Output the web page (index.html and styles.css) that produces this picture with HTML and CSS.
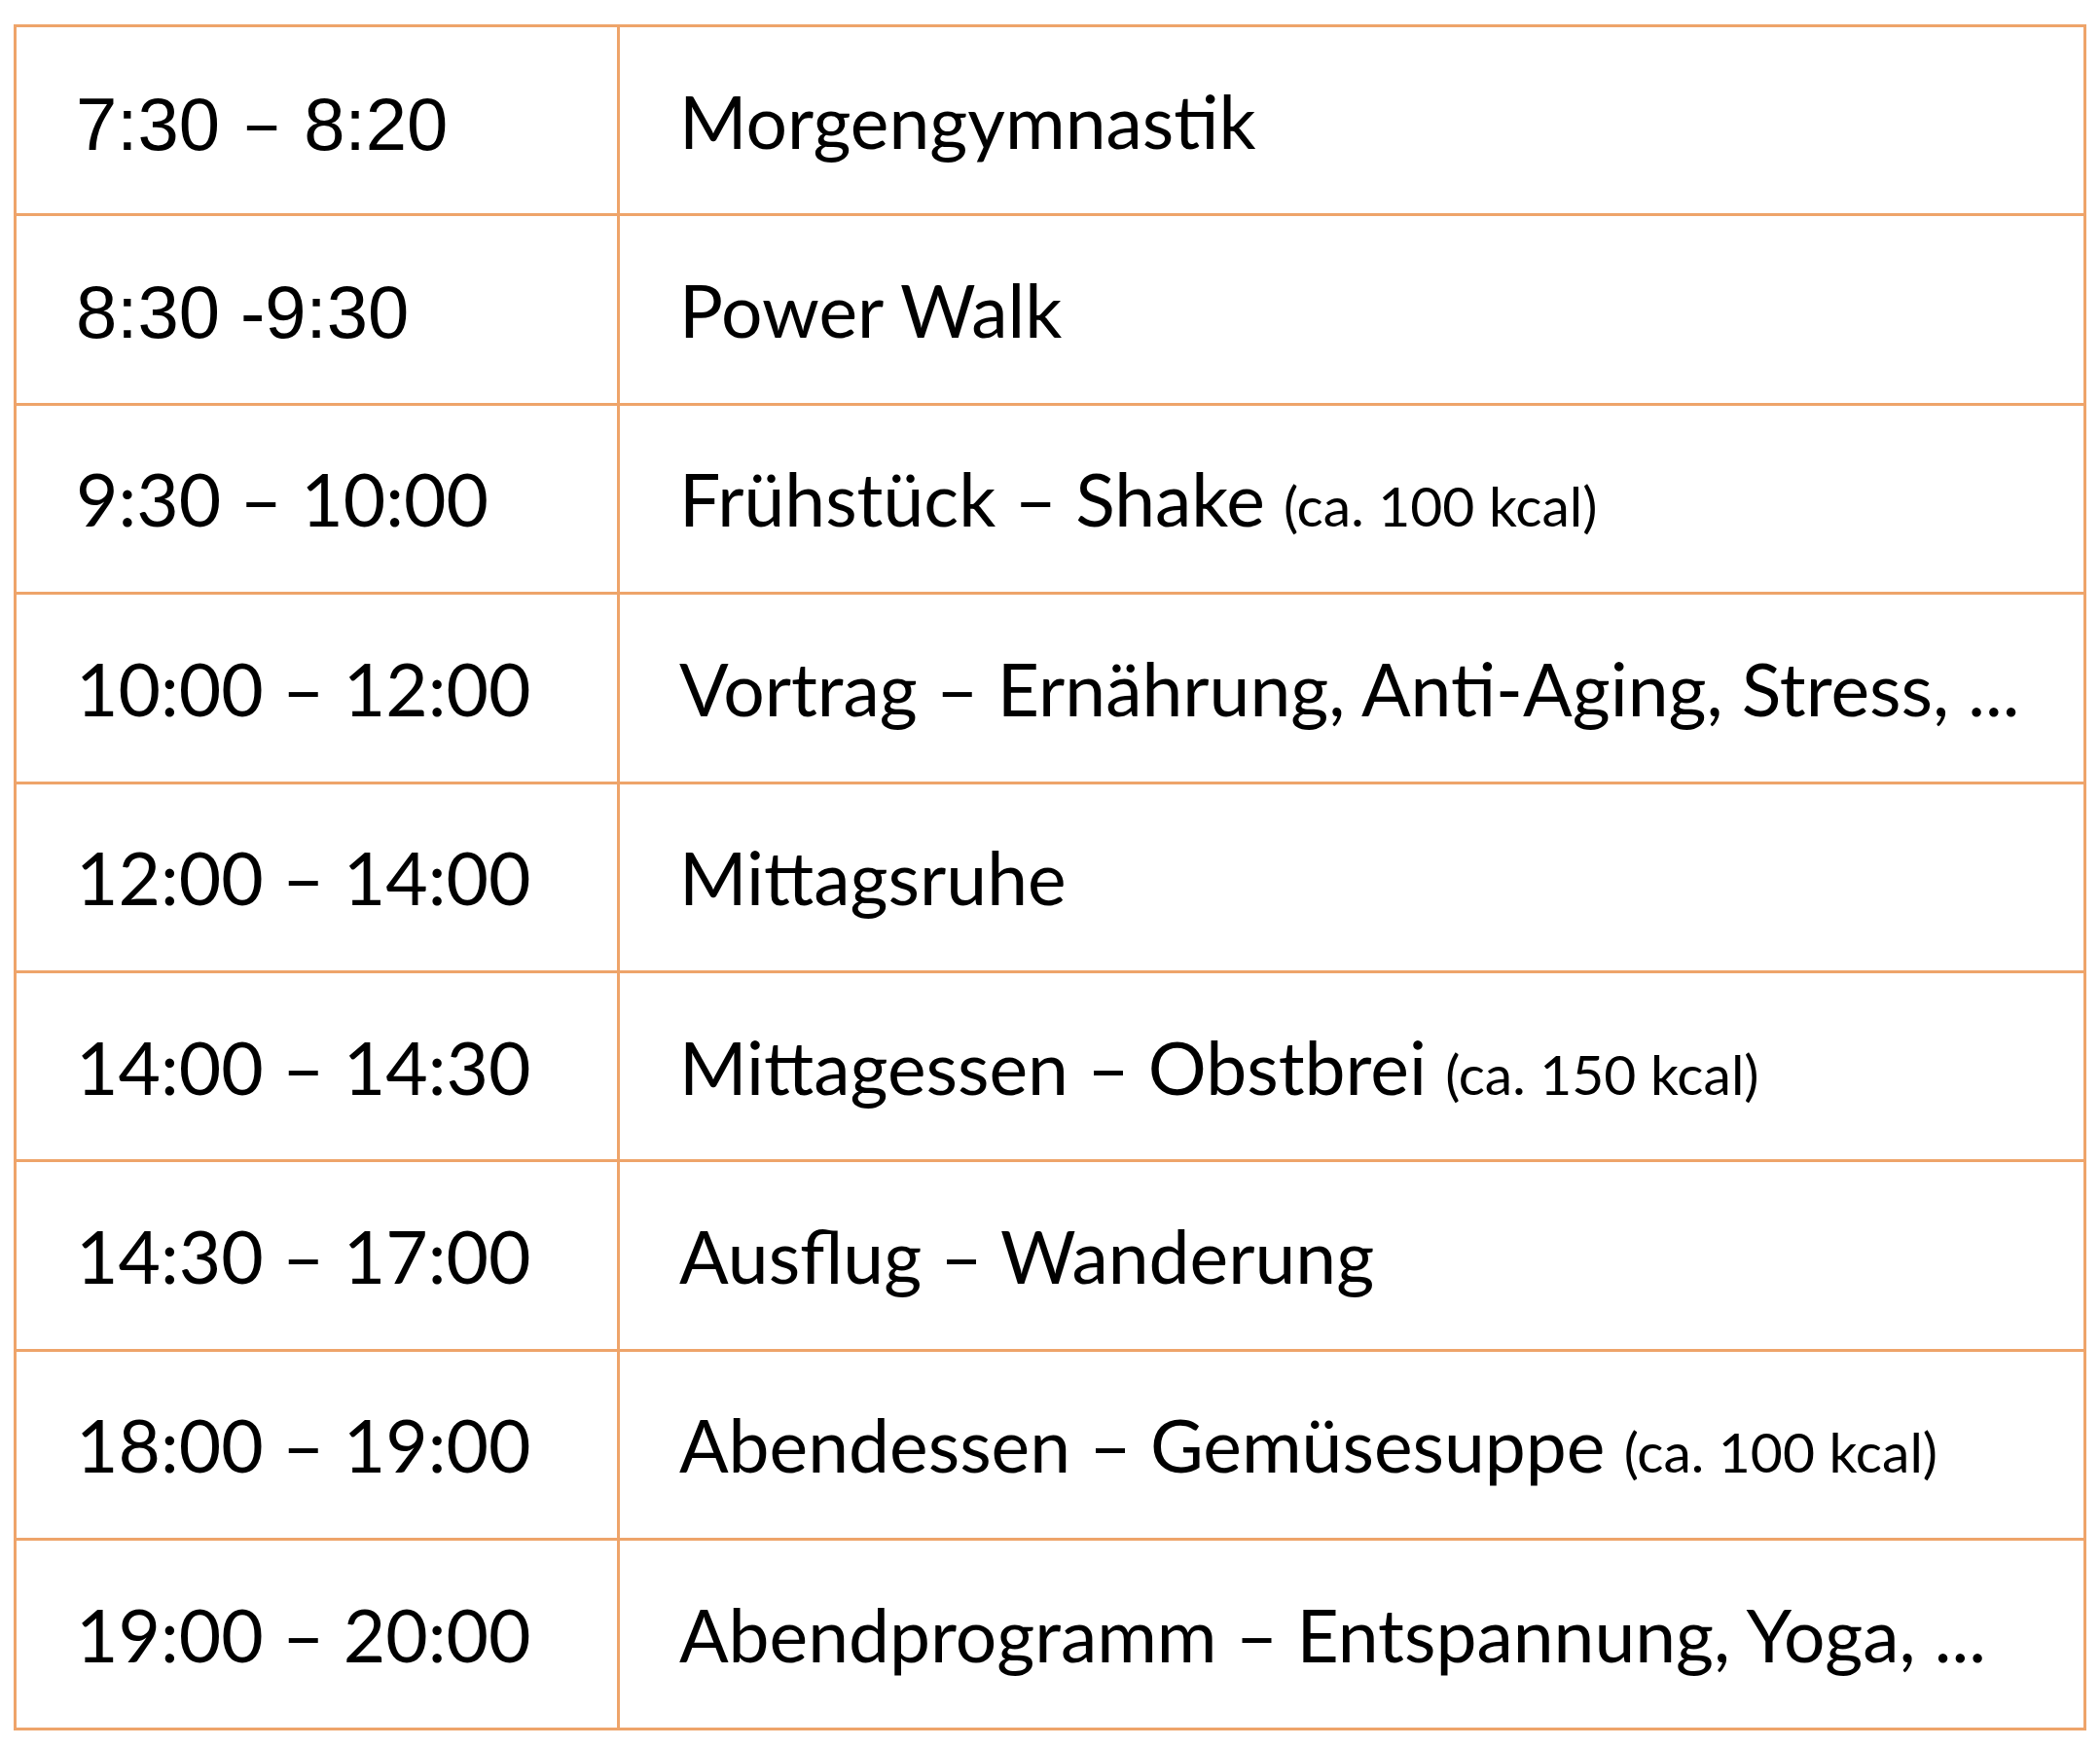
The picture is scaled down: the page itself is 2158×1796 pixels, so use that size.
FILE: index.html
```html
<!DOCTYPE html>
<html lang="de">
<head>
<meta charset="utf-8">
<title>Tagesablauf</title>
<link rel="stylesheet" href="styles.css">
</head>
<body>
<table class="schedule">
  <tbody>
    <tr><td class="time time-alt">7:30 <span class="dash">–</span> 8:20</td><td class="activity">Morgengymnastik</td></tr>
    <tr><td class="time time-alt">8:30 -9:30</td><td class="activity">Power Walk</td></tr>
    <tr><td class="time">9:30 – 10:00</td><td class="activity">Frühstück – Shake <span class="kcal">(ca. 100 kcal)</span></td></tr>
    <tr><td class="time">10:00 – 12:00</td><td class="activity">Vortrag – Ernährung, Anti-Aging, Stress, ...</td></tr>
    <tr><td class="time">12:00 – 14:00</td><td class="activity">Mittagsruhe</td></tr>
    <tr><td class="time">14:00 – 14:30</td><td class="activity">Mittagessen – Obstbrei <span class="kcal">(ca. 150 kcal)</span></td></tr>
    <tr><td class="time">14:30 – 17:00</td><td class="activity">Ausflug – Wanderung</td></tr>
    <tr><td class="time">18:00 – 19:00</td><td class="activity">Abendessen – Gemüsesuppe <span class="kcal">(ca. 100 kcal)</span></td></tr>
    <tr><td class="time">19:00 – 20:00</td><td class="activity">Abendprogramm – Entspannung, Yoga, ...</td></tr>
  </tbody>
</table>
</body>
</html>
```

FILE: styles.css
```css
html, body {
  margin: 0;
  padding: 0;
  background: #ffffff;
}

body {
  padding: 25px 0 0 14px;
  font-family: Lato, "Noto Sans", sans-serif;
  color: #000000;
}

.schedule {
  border-collapse: collapse;
  width: 2130px;
  table-layout: fixed;
}

.schedule td {
  border: 3px solid #eea46a;
  height: 191.4px;
  padding: 0 0 0 61px;
  vertical-align: middle;
  font-size: 75px;
  line-height: 1.2;
  white-space: nowrap;
}

.schedule td.time {
  width: 556px;
}

.schedule td.time-alt {
  font-family: "Liberation Sans", Arial, sans-serif;
  font-size: 76px;
  line-height: 90px;
  padding-top: 6px;
  height: 185.4px;
}

.dash {
  font-family: Lato, sans-serif;
}

.kcal {
  font-size: 57px;
}
```
